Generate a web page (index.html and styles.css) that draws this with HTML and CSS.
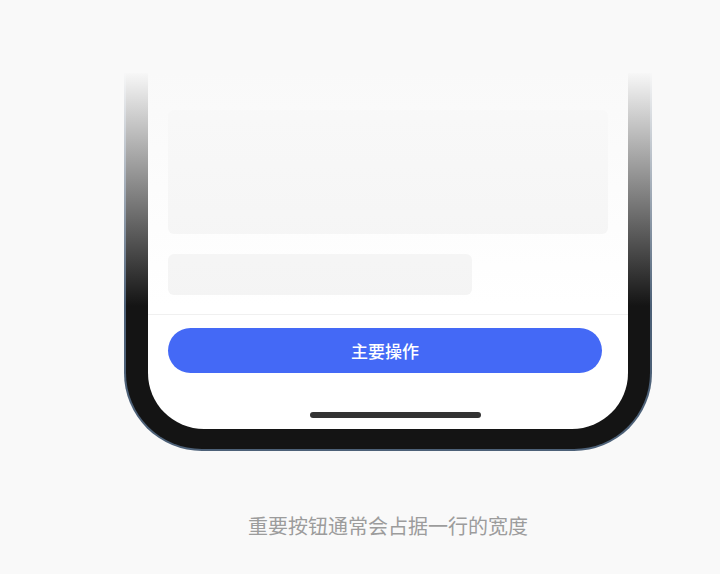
FILE: index.html
```html
<!DOCTYPE html>
<html lang="zh-CN">
<head>
<meta charset="UTF-8">
<meta name="viewport" content="width=device-width, initial-scale=1.0">
<title>主要操作</title>
<link rel="stylesheet" href="styles.css">
</head>
<body>
<div class="stage">
    <div class="phone">
        <div class="screen">
            <div class="content">
                <div class="card card-large"></div>
                <div class="card card-small"></div>
            </div>
            <div class="action-bar">
                <button class="primary-btn">主要操作</button>
            </div>
            <div class="home-indicator"></div>
        </div>
        <!-- fade out the top of the phone -->
        <div class="fade"></div>
    </div>
    <p class="caption">重要按钮通常会占据一行的宽度</p>
</div>
</body>
</html>
```
FILE: styles.css
```css
body {
    margin: 0;
    background: #f9f9f9;
    font-family: "Noto Sans CJK SC", "Noto Sans", sans-serif;
}

.stage {
    width: 528px;
    padding-top: 73px;
    margin-left: 124px;
}

.phone {
    position: relative;
    box-sizing: border-box;
    height: 378px;
    background: #141414;
    border: 2px solid #4d6178;
    border-top: none;
    border-radius: 0 0 78px 78px;
    padding: 0 22px 20px;
}

.screen {
    height: 100%;
    background: #fff;
    border-radius: 0 0 56px 56px;
    display: flex;
    flex-direction: column;
}

.content {
    padding: 37px 20px 0;
    display: flex;
    flex-direction: column;
    gap: 20px;
}

.card {
    background: #f4f4f4;
    border-radius: 6px;
}

.card-large {
    height: 124px;
}

.card-small {
    width: 304px;
    height: 41px;
}

.action-bar {
    margin-top: 19px;
    border-top: 1px solid #f0f0f0;
    padding: 13px 26px 0 20px;
}

.primary-btn {
    display: block;
    width: 100%;
    height: 45px;
    border: none;
    outline: none;
    border-radius: 23px;
    background: #4469f6;
    color: #fff;
    font-family: inherit;
    font-size: 17px;
    font-weight: 500;
    cursor: pointer;
}

.home-indicator {
    width: 171px;
    height: 6px;
    margin: 39px 0 0 162px;
    background: #333;
    border-radius: 3px;
}

.fade {
    position: absolute;
    top: -2px;
    left: -6px;
    right: -6px;
    height: 235px;
    background: linear-gradient(#f9f9f9 0%, rgba(249, 249, 249, 0) 100%);
}

.caption {
    margin: 61px 0 0;
    text-align: center;
    font-size: 20px;
    line-height: 28px;
    color: #9c9c9c;
}
```
